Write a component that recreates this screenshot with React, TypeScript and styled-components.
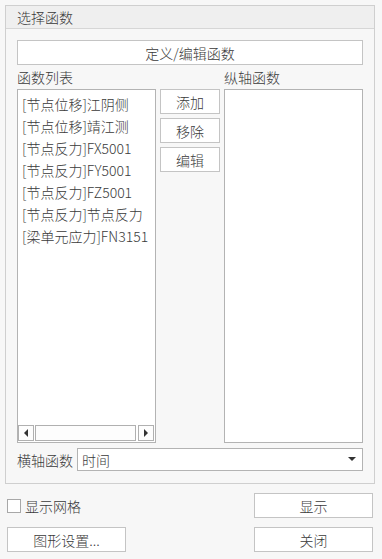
import styled, { createGlobalStyle } from 'styled-components';

const GlobalStyle = createGlobalStyle`
  html, body {
    margin: 0;
    padding: 0;
    background: #f7f7f7;
  }
  body {
    font-family: "Noto Sans CJK SC", "Noto Sans", sans-serif;
    font-size: 14px;
    font-weight: 300;
    color: #3a3a3a;
  }
  * {
    box-sizing: border-box;
  }
`;

const Page = styled.div`
  width: 382px;
  height: 559px;
  padding: 5px 7px 0 5px;
`;

const GroupBox = styled.div`
  width: 370px;
  height: 479px;
  border: 1px solid #cfcfcf;
  display: flex;
  flex-direction: column;
`;

const GroupHeader = styled.div`
  height: 23px;
  line-height: 22px;
  padding-left: 11px;
  background: #efefef;
  border-bottom: 1px solid #d6d6d6;
`;

const GroupBody = styled.div`
  padding: 11px 11px 0 11px;
  display: flex;
  flex-direction: column;
`;

const Button = styled.button<{ width?: number }>`
  height: 25px;
  width: ${({ width }) => (width ? `${width}px` : '100%')};
  padding: 0;
  background: #ffffff;
  border: 1px solid #c4c4c4;
  font-family: inherit;
  font-size: 14px;
  font-weight: 300;
  color: #3a3a3a;
  line-height: 22px;
`;

const Columns = styled.div`
  display: grid;
  grid-template-columns: 139px 60px 139px;
  grid-template-rows: 24px 354px;
  column-gap: 4px;
`;

const ColumnLabel = styled.div`
  line-height: 24px;
  height: 24px;
`;

const ListBox = styled.div`
  position: relative;
  border: 1px solid #b3b3b3;
  background: #ffffff;
`;

const ListItems = styled.ul`
  list-style: none;
  margin: 0;
  padding: 3px 0 0 4px;
`;

const ListItem = styled.li`
  line-height: 22px;
  white-space: nowrap;
`;

const HScrollBar = styled.div`
  position: absolute;
  left: 0;
  right: 0;
  bottom: 1px;
  height: 16px;
  display: flex;
  gap: 1px;
  padding-right: 1px;
`;

const ScrollArrow = styled.div`
  width: 16px;
  height: 16px;
  border: 1px solid #b0b0b0;
  background: #fdfdfd;
  display: flex;
  align-items: center;
  justify-content: center;
`;

const ScrollThumb = styled.div`
  width: 102px;
  height: 16px;
  border: 1px solid #b0b0b0;
  background: #fdfdfd;
`;

const ScrollTrack = styled.div`
  flex: 1;
`;

const ButtonStack = styled.div`
  display: flex;
  flex-direction: column;
  gap: 4px;
`;

const AxisRow = styled.div`
  display: flex;
  align-items: center;
  margin-top: 5px;
  height: 23px;
`;

const AxisLabel = styled.span`
  width: 60px;
`;

const Select = styled.div`
  flex: 1;
  height: 23px;
  border: 1px solid #b3b3b3;
  background: #ffffff;
  display: flex;
  align-items: center;
  justify-content: space-between;
  padding: 0 6px 0 4px;
`;

const Footer = styled.div`
  padding: 9px 2px 0 2px;
  display: grid;
  grid-template-rows: 25px 25px;
  row-gap: 9px;
`;

const FooterRow = styled.div`
  display: flex;
  justify-content: space-between;
  align-items: center;
`;

const CheckLabel = styled.label`
  display: flex;
  align-items: center;
  gap: 4px;
`;

const CheckBox = styled.span`
  width: 14px;
  height: 14px;
  border: 1px solid #a8a8a8;
  background: #ffffff;
`;

const Triangle = ({ dir }: { dir: 'left' | 'right' | 'down' }) => {
  const points =
    dir === 'left' ? '4,0 4,8 0,4' : dir === 'right' ? '0,0 0,8 4,4' : '0,0 8,0 4,4';
  const w = dir === 'down' ? 8 : 4;
  const h = dir === 'down' ? 5 : 8;
  return (
    <svg width={w} height={h} viewBox={`0 0 ${w} ${h}`}>
      <polygon points={points} fill="#333" />
    </svg>
  );
};

const functions = [
  '[节点位移]江阴侧',
  '[节点位移]靖江测',
  '[节点反力]FX5001',
  '[节点反力]FY5001',
  '[节点反力]FZ5001',
  '[节点反力]节点反力',
  '[梁单元应力]FN3151',
];

export default function App() {
  return (
    <Page>
      <GlobalStyle />
      <GroupBox>
        <GroupHeader>选择函数</GroupHeader>
        <GroupBody>
          <Button>定义/编辑函数</Button>
          <Columns>
            <ColumnLabel>函数列表</ColumnLabel>
            <div />
            <ColumnLabel>纵轴函数</ColumnLabel>
            <ListBox>
              <ListItems>
                {functions.map((f) => (
                  <ListItem key={f}>{f}</ListItem>
                ))}
              </ListItems>
              <HScrollBar>
                <ScrollArrow>
                  <Triangle dir="left" />
                </ScrollArrow>
                <ScrollThumb />
                <ScrollTrack />
                <ScrollArrow>
                  <Triangle dir="right" />
                </ScrollArrow>
              </HScrollBar>
            </ListBox>
            <ButtonStack>
              <Button>添加</Button>
              <Button>移除</Button>
              <Button>编辑</Button>
            </ButtonStack>
            <ListBox />
          </Columns>
          <AxisRow>
            <AxisLabel>横轴函数</AxisLabel>
            <Select>
              <span>时间</span>
              <Triangle dir="down" />
            </Select>
          </AxisRow>
        </GroupBody>
      </GroupBox>
      <Footer>
        <FooterRow>
          <CheckLabel>
            <CheckBox />
            显示网格
          </CheckLabel>
          <Button width={119}>显示</Button>
        </FooterRow>
        <FooterRow>
          <Button width={119}>图形设置...</Button>
          <Button width={119}>关闭</Button>
        </FooterRow>
      </Footer>
    </Page>
  );
}
